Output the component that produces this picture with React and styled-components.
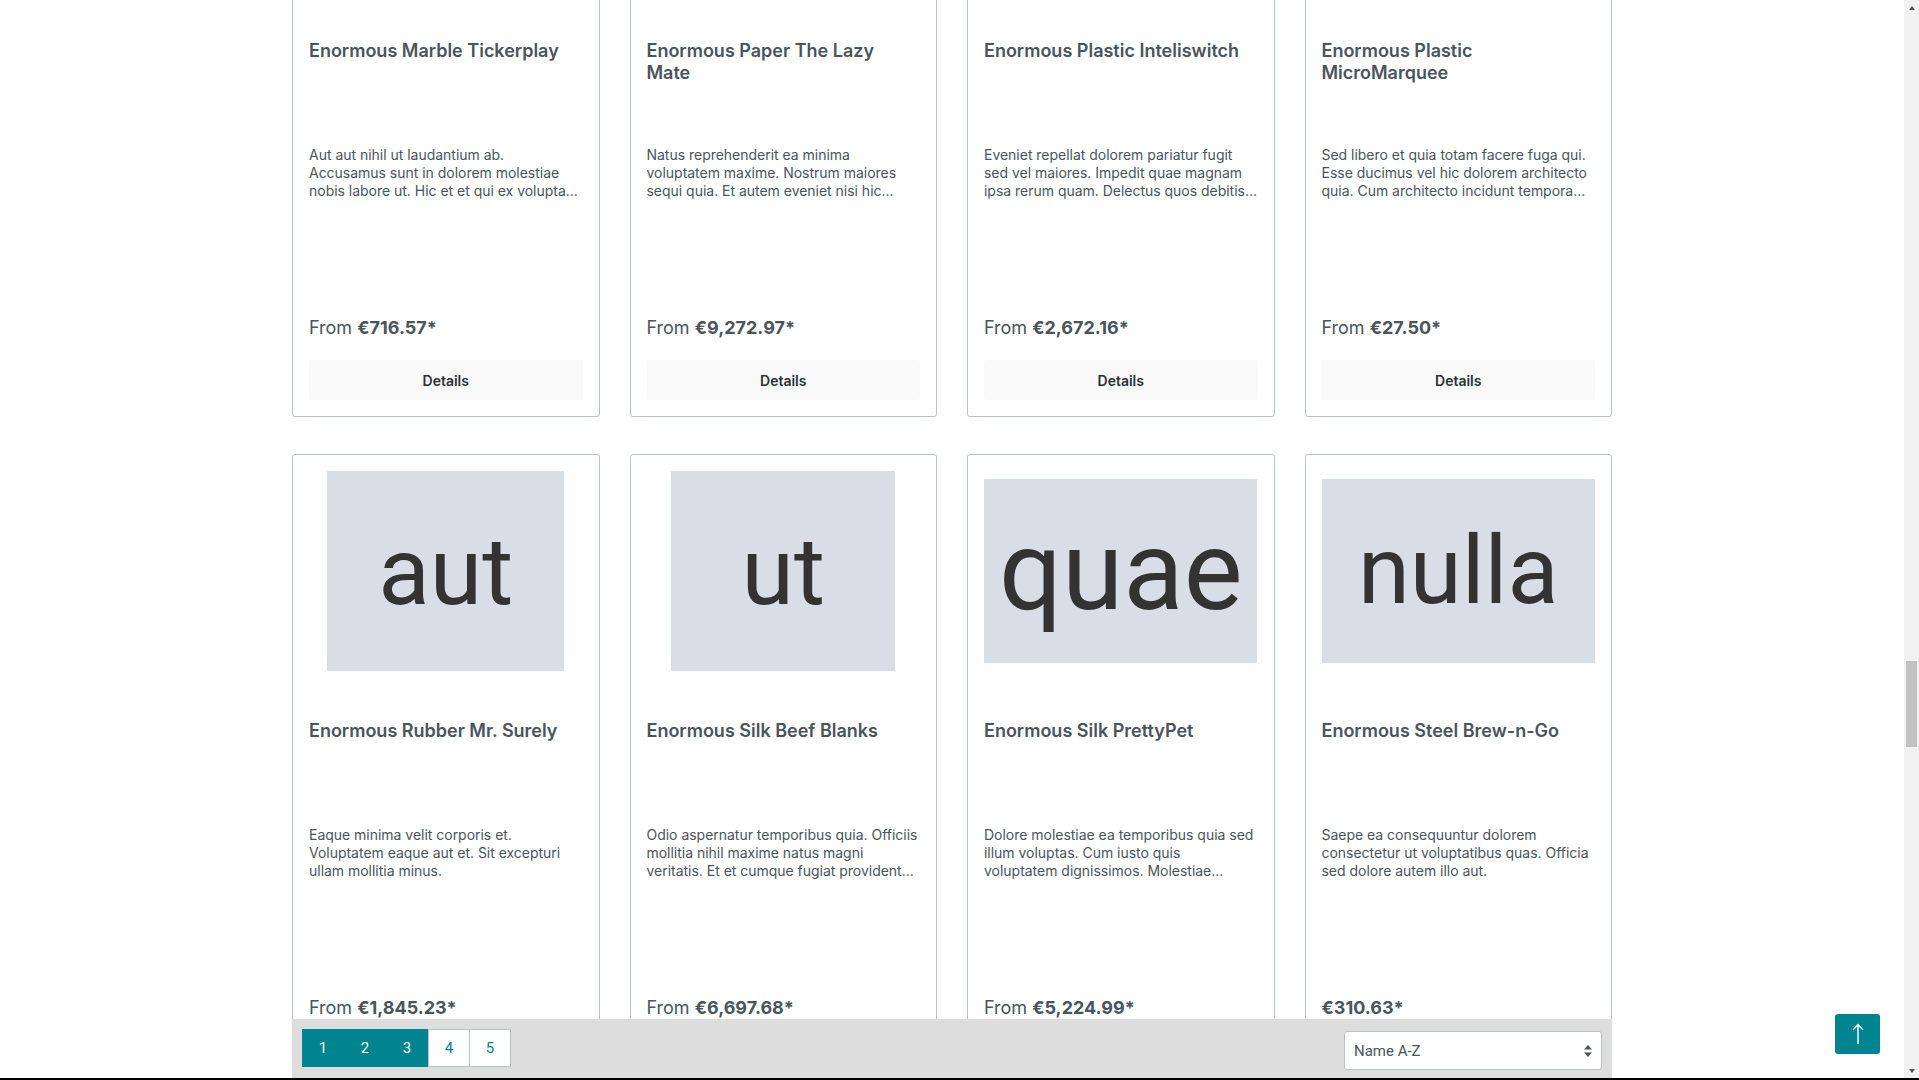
import React, { useLayoutEffect, useRef } from 'react';
import styled, { createGlobalStyle } from 'styled-components';

const GlobalStyle = createGlobalStyle`
  html, body {
    margin: 0;
    padding: 0;
    height: 100%;
    overflow: hidden;
    background: #fff;
  }
  body {
    font-family: Inter, "Noto Sans", sans-serif;
    color: #4a545b;
  }
  * { box-sizing: border-box; }
`;

const Screen = styled.div`
  height: 100vh;
  display: flex;
  flex-direction: column;
`;

const Window = styled.div`
  flex: 1;
  display: flex;
  min-height: 0;
`;

const Viewport = styled.div`
  flex: 1;
  overflow: hidden;
`;

const BottomEdge = styled.div`
  height: 2px;
  flex-shrink: 0;
  background: #000;
`;

const Container = styled.div`
  width: 1320px;
  margin: 0 auto;
  padding: 40px 0 0;
`;

const Grid = styled.div`
  display: grid;
  grid-template-columns: repeat(4, 1fr);
  column-gap: 30px;
  row-gap: 37px;
`;

const Card = styled.div`
  height: 643px;
  display: flex;
  flex-direction: column;
  padding: 16px;
  border: 1px solid #bcc1c7;
  border-radius: 3px;
  background: #fff;

  & > * {
    flex-shrink: 0;
  }
`;

const ImageWrap = styled.div`
  height: 200px;
  display: flex;
  align-items: center;
  justify-content: center;
`;

const Placeholder = styled.div`
  width: ${p => p.$w}px;
  height: ${p => p.$h}px;
  display: flex;
  align-items: center;
  justify-content: center;
  background: #d9dde5;
  color: #333;
  font-family: Roboto, "Liberation Sans", sans-serif;
  font-size: ${p => p.$fs}px;
  line-height: 1;
`;

const Title = styled.div`
  margin-top: 49px;
  height: 44px;
  font-size: 18px;
  font-weight: 600;
  line-height: 22px;
  color: #4a545b;
  overflow: hidden;
  display: -webkit-box;
  -webkit-line-clamp: 2;
  -webkit-box-orient: vertical;
`;

const Description = styled.div`
  margin-top: 62px;
  height: 55px;
  font-size: 14px;
  line-height: 18.2px;
  letter-spacing: -0.02px;
  color: #4a545b;
  overflow: hidden;
  display: -webkit-box;
  -webkit-line-clamp: 3;
  -webkit-box-orient: vertical;
`;

const Price = styled.div`
  margin-top: 116px;
  font-size: 18px;
  line-height: 22px;
  color: #4a545b;

  b {
    font-weight: 700;
  }
`;

const DetailsButton = styled.button`
  margin-top: 21px;
  height: 40px;
  width: 100%;
  border: none;
  border-radius: 3px;
  background: #f9f9f9;
  color: #2b3136;
  font-family: Inter, "Noto Sans", sans-serif;
  font-size: 14px;
  font-weight: 600;
  cursor: pointer;
`;

const StickyBar = styled.div`
  position: sticky;
  bottom: 0;
  height: 59px;
  margin-top: 40px;
  display: flex;
  justify-content: space-between;
  align-items: flex-start;
  padding: 10px 10px 0;
  background: #ddd;
`;

const Pagination = styled.div`
  display: flex;
`;

const PageItem = styled.div`
  width: ${p => (p.$joined ? 41 : 42)}px;
  height: 38px;
  display: flex;
  align-items: center;
  justify-content: center;
  font-family: Roboto, "Liberation Sans", sans-serif;
  font-size: 15px;
  background: ${p => (p.$active ? '#008490' : '#fff')};
  color: ${p => (p.$active ? '#fff' : '#008490')};
  border: 1px solid ${p => (p.$active ? '#008490' : '#bcc1c7')};
  ${p => p.$joined && 'border-left: none;'}
`;

const SelectWrap = styled.div`
  position: relative;
  margin-top: 2px;
  width: 258px;
  height: 39px;
`;

const Select = styled.select`
  width: 100%;
  height: 100%;
  appearance: none;
  padding: 0 30px 0 9px;
  border: 1px solid #bcc1c7;
  border-radius: 3px;
  background: #fff;
  color: #4a545b;
  font-family: Roboto, "Liberation Sans", sans-serif;
  font-size: 15px;
  outline: none;
`;

const SelectCaret = styled.svg`
  position: absolute;
  right: 10px;
  top: 14px;
  pointer-events: none;
`;

const ToTop = styled.button`
  position: fixed;
  right: 39px;
  bottom: 26px;
  width: 45px;
  height: 40px;
  display: flex;
  align-items: center;
  justify-content: center;
  border: none;
  border-radius: 3px;
  background: #008490;
  cursor: pointer;
`;

const Scrollbar = styled.div`
  position: relative;
  width: 15px;
  flex-shrink: 0;
  display: flex;
  flex-direction: column;
  justify-content: space-between;
  background: #f1f1f1;
`;

const ScrollArrow = styled.div`
  height: 15px;
  display: flex;
  align-items: center;
  justify-content: center;

  &::after {
    content: '';
    border-left: 3.5px solid transparent;
    border-right: 3.5px solid transparent;
    ${p => (p.$up ? 'border-bottom: 4px solid #505050;' : 'border-top: 4px solid #505050;')}
  }
`;

const Thumb = styled.div`
  position: absolute;
  left: 2px;
  right: 2px;
  background: #c1c1c1;
`;

// descriptions come pre-shortened, like the shop does it
const products = [
  {
    name: 'Enormous Marble Tickerplay',
    text: 'Aut aut nihil ut laudantium ab. Accusamus sunt in dolorem molestiae nobis labore ut. Hic et et qui ex volupta...',
    price: '€716.57*', from: true,
    img: { label: 'et', w: 240, h: 200, fs: 95 },
  },
  {
    name: 'Enormous Paper The Lazy Mate',
    text: 'Natus reprehenderit ea minima voluptatem maxime. Nostrum maiores sequi quia. Et autem eveniet nisi hic...',
    price: '€9,272.97*', from: true,
    img: { label: 'qui', w: 230, h: 200, fs: 95 },
  },
  {
    name: 'Enormous Plastic Inteliswitch',
    text: 'Eveniet repellat dolorem pariatur fugit sed vel maiores. Impedit quae magnam ipsa rerum quam. Delectus quos debitis...',
    price: '€2,672.16*', from: true,
    img: { label: 'sit', w: 273, h: 184, fs: 105 },
  },
  {
    name: 'Enormous Plastic MicroMarquee',
    text: 'Sed libero et quia totam facere fuga qui. Esse ducimus vel hic dolorem architecto quia. Cum architecto incidunt tempora...',
    price: '€27.50*', from: true,
    img: { label: 'est', w: 273, h: 184, fs: 105 },
  },
  {
    name: 'Enormous Rubber Mr. Surely',
    text: 'Eaque minima velit corporis et. Voluptatem eaque aut et. Sit excepturi ullam mollitia minus.',
    price: '€1,845.23*', from: true,
    img: { label: 'aut', w: 237, h: 200, fs: 95 },
  },
  {
    name: 'Enormous Silk Beef Blanks',
    text: 'Odio aspernatur temporibus quia. Officiis mollitia nihil maxime natus magni veritatis. Et et cumque fugiat provident...',
    price: '€6,697.68*', from: true,
    img: { label: 'ut', w: 224, h: 200, fs: 95 },
  },
  {
    name: 'Enormous Silk PrettyPet',
    text: 'Dolore molestiae ea temporibus quia sed illum voluptas. Cum iusto quis voluptatem dignissimos. Molestiae...',
    price: '€5,224.99*', from: true,
    img: { label: 'quae', w: 273, h: 184, fs: 111 },
  },
  {
    name: 'Enormous Steel Brew-n-Go',
    text: 'Saepe ea consequuntur dolorem consectetur ut voluptatibus quas. Officia sed dolore autem illo aut.',
    price: '€310.63*', from: false,
    img: { label: 'nulla', w: 273, h: 184, fs: 94 },
  },
];

const pages = [1, 2, 3, 4, 5];
const activePages = 3;

// scroll position of the listing, and how the fake scrollbar shows it
const SCROLL_TOP = 266;
const thumb = { top: 661, height: 86 };

const ProductCard = ({ product }) => (
  <Card>
    <ImageWrap>
      <Placeholder $w={product.img.w} $h={product.img.h} $fs={product.img.fs}>
        {product.img.label}
      </Placeholder>
    </ImageWrap>
    <Title>{product.name}</Title>
    <Description>{product.text}</Description>
    <Price>
      {product.from && 'From '}
      <b>{product.price}</b>
    </Price>
    <DetailsButton>Details</DetailsButton>
  </Card>
);

const App = () => {
  const viewportRef = useRef(null);

  useLayoutEffect(() => {
    if (viewportRef.current) viewportRef.current.scrollTop = SCROLL_TOP;
  }, []);

  return (
    <>
      <GlobalStyle />
      <Screen>
        <Window>
          <Viewport ref={viewportRef}>
            <Container>
              <Grid>
                {products.map(p => (
                  <ProductCard key={p.name} product={p} />
                ))}
              </Grid>
              <StickyBar>
                <Pagination>
                  {pages.map(n => (
                    <PageItem key={n} $active={n <= activePages} $joined={n > activePages + 1}>
                      {n}
                    </PageItem>
                  ))}
                </Pagination>
                <SelectWrap>
                  <Select defaultValue="name-asc">
                    <option value="name-asc">Name A-Z</option>
                    <option value="name-desc">Name Z-A</option>
                    <option value="price-asc">Price ascending</option>
                    <option value="price-desc">Price descending</option>
                  </Select>
                  <SelectCaret width="8" height="12" viewBox="0 0 8 12">
                    <path d="M4 0 L8 4.5 H0 Z M4 12 L0 7.5 H8 Z" fill="#4a545b" />
                  </SelectCaret>
                </SelectWrap>
              </StickyBar>
            </Container>
          </Viewport>
          <Scrollbar>
            <ScrollArrow $up />
            <Thumb style={{ top: thumb.top, height: thumb.height }} />
            <ScrollArrow />
          </Scrollbar>
        </Window>
        <BottomEdge />
      </Screen>
      <ToTop aria-label="Back to top">
        <svg width="12" height="22" viewBox="0 0 12 22">
          <path d="M6 21 V1.5 M1 7 L6 1.5 L11 7" stroke="#fff" strokeWidth="1.4" fill="none" />
        </svg>
      </ToTop>
    </>
  );
};

export default App;
